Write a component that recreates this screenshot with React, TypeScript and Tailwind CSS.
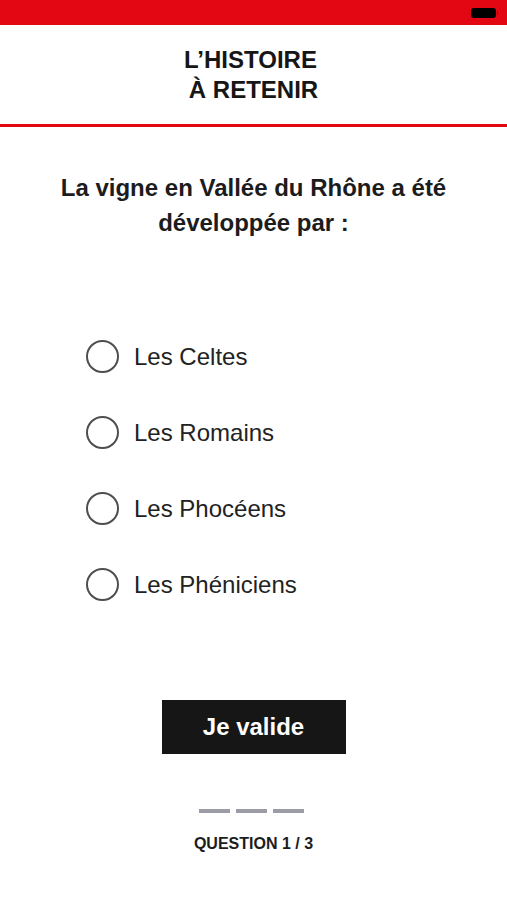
import { useState } from 'react';

const options = ['Les Celtes', 'Les Romains', 'Les Phocéens', 'Les Phéniciens'];

export default function App() {
  const [selected, setSelected] = useState<number | null>(null);

  return (
    <div
      className="flex min-h-[900px] w-full flex-col bg-white text-[#1c1c1c]"
      style={{ fontFamily: '"Liberation Sans", Arial, sans-serif' }}
    >
      {/* Status bar */}
      <div className="flex h-[25px] items-center justify-end bg-[#e30613] pr-[9px]">
        <div className="flex items-center">
          <div className="h-[10px] w-[25px] rounded-[3px] bg-black" />
          <div className="ml-px h-[4px] w-[1.5px] rounded-r-sm bg-[#7a0a10]" />
        </div>
      </div>

      {/* Header */}
      <div className="pt-[20px] pb-[19px] text-center text-[24px] leading-[30px] font-bold text-[#161616]">
        <div className="pr-[6px]">L’HISTOIRE</div>
        <div>À RETENIR</div>
      </div>
      <div className="h-[3px] bg-[#e30613]" />

      {/* Question */}
      <div className="mt-[43px] px-6 text-center text-[24px] leading-[35px] font-bold">
        La vigne en Vallée du Rhône a été
        <br />
        développée par :
      </div>

      {/* Options */}
      <div className="mt-[99px] flex flex-col gap-[41px] pl-[86px]">
        {options.map((label, i) => (
          <button
            key={label}
            onClick={() => setSelected(i)}
            className="flex h-[35px] items-center gap-[15px] text-left"
          >
            <span className="flex h-[33px] w-[33px] items-center justify-center rounded-full border-2 border-[#4e4e4e]">
              {selected === i && <span className="h-[17px] w-[17px] rounded-full bg-[#1a1a1a]" />}
            </span>
            <span className="text-[24px] leading-none text-[#222]">{label}</span>
          </button>
        ))}
      </div>

      {/* Submit */}
      <div className="mt-[98px] flex justify-center">
        <button className="flex h-[54px] w-[184px] items-center justify-center bg-[#161616] text-[24px] font-bold text-white">
          Je valide
        </button>
      </div>

      {/* Progress */}
      <div className="mt-[55px] flex justify-center gap-[6px] pr-[5px]">
        <div className="h-[4px] w-[31px] bg-[#9c9ca6]" />
        <div className="h-[4px] w-[31px] bg-[#9c9ca6]" />
        <div className="h-[4px] w-[31px] bg-[#9c9ca6]" />
      </div>
      <div className="mt-[21px] text-center text-[16px] leading-[20px] font-bold text-[#1c1c1c]">
        QUESTION 1 / 3
      </div>
    </div>
  );
}
